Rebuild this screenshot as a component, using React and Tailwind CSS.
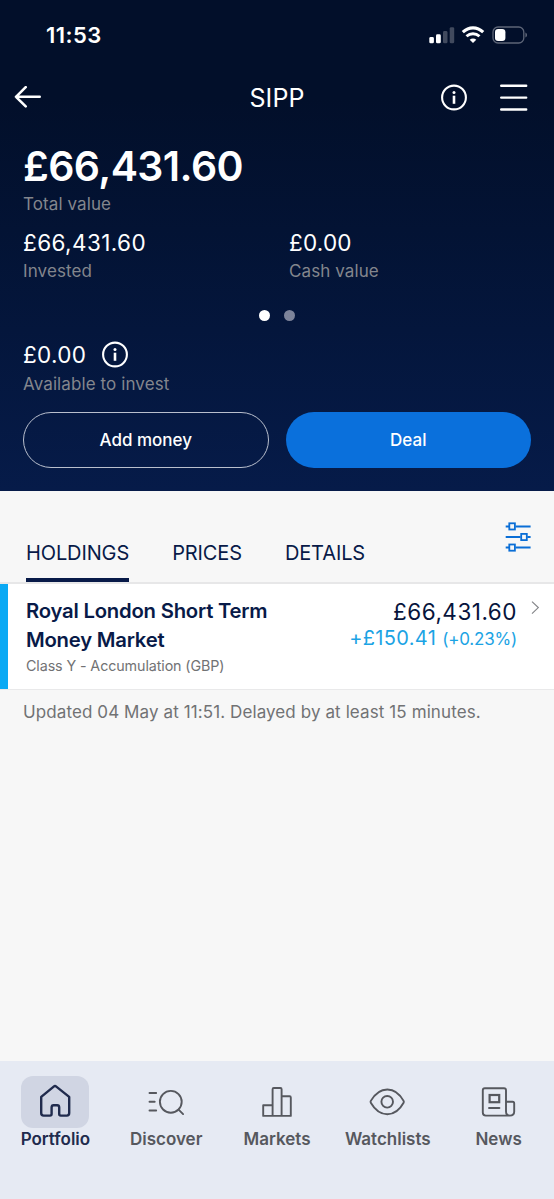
const stats = [
  { value: "£66,431.60", label: "Invested" },
  { value: "£0.00", label: "Cash value" },
];

const tabs = ["HOLDINGS", "PRICES", "DETAILS"];

const InfoIcon = () => {
  return (
    <svg width="28" height="28" viewBox="0 0 28 28" fill="none">
      <circle cx="14" cy="13.5" r="11.9" stroke="white" strokeWidth="2.1" />
      <circle cx="14" cy="8.4" r="1.5" fill="white" />
      <path d="M14 11.7V19.8" stroke="white" strokeWidth="2.6" />
    </svg>
  );
};

const StatusBar = () => {
  return (
    <div className="flex items-center justify-between h-[70px] pl-[46px] pr-[26px]">
      <span className="text-[22px] font-semibold tracking-[0.45px]">11:53</span>
      <svg width="100" height="20" viewBox="0 0 100 20" fill="none">
        <rect x="1.3" y="12" width="4.6" height="6.3" rx="1.4" fill="white" />
        <rect x="8" y="9.3" width="4.8" height="9" rx="1.4" fill="white" />
        <rect x="15" y="6" width="4.5" height="12.3" rx="1.4" fill="#414a5e" />
        <rect x="21.7" y="2.2" width="4.5" height="16.1" rx="1.4" fill="#414a5e" />
        <path
          d="M34.8 7.2C40.9 1.4 49.1 1.4 55.2 7.2"
          stroke="white"
          strokeWidth="3.1"
        />
        <path
          d="M38.5 11.3C42.3 7.8 47.7 7.8 51.5 11.3"
          stroke="white"
          strokeWidth="2.9"
        />
        <path
          d="M45 18.1L41.7 14.7C43.6 13.1 46.4 13.1 48.3 14.7Z"
          fill="white"
        />
        <rect
          x="65"
          y="2"
          width="30.8"
          height="16"
          rx="5"
          stroke="#5d6577"
          strokeWidth="1.3"
        />
        <rect x="67" y="4" width="10.4" height="12" rx="3.2" fill="white" />
        <path d="M97.4 7.5C99.6 8.2 99.6 11.8 97.4 12.5Z" fill="#5d6577" />
      </svg>
    </div>
  );
};

const Header = () => {
  return (
    <div className="grid grid-cols-3 items-center h-[55px] pl-[14px] pr-[26px]">
      <svg width="28" height="24" viewBox="0 0 28 24" fill="none">
        <path
          d="M25.7 10.8H2M11.7 1.2L2 10.8L11.7 20.4"
          stroke="white"
          strokeWidth="2.6"
          strokeLinecap="round"
          strokeLinejoin="round"
        />
      </svg>
      <h1 className="pt-[2px] pl-3 text-[25px] font-normal text-center tracking-[0.1px]">
        SIPP
      </h1>
      <div className="flex items-center justify-end gap-8">
        <InfoIcon />
        <svg width="28" height="28" viewBox="0 0 28 28" fill="none">
          <path
            d="M1.2 1.7H26.2M1.2 13.6H26.2M1.2 25.5H26.2"
            stroke="white"
            strokeWidth="2.4"
            strokeLinecap="round"
          />
        </svg>
      </div>
    </div>
  );
};

const Summary = () => {
  return (
    <div className="px-[23px] pt-[15px]">
      <p className="h-[52px] leading-[52px] text-[41px] font-semibold tracking-[-0.6px]">
        £66,431.60
      </p>
      <p className="h-[22px] pt-px leading-[22px] text-[17px] tracking-[0.1px] text-[#83868d]">
        Total value
      </p>
      <div className="grid grid-cols-[266px_1fr] pt-[14px]">
        {stats.map((item, i) => {
          return (
            <div key={i}>
              <p
                className={`leading-[30px] text-[22.5px] ${
                  i === 0 ? "tracking-[0.4px]" : "tracking-[0.2px]"
                }`}
              >
                {item.value}
              </p>
              <p className="leading-[27px] text-[17px] tracking-[0.1px] text-[#83868d]">
                {item.label}
              </p>
            </div>
          );
        })}
      </div>
      <div className="flex justify-center gap-[14px] pt-[25px]">
        <span className="rounded-full size-[11px] bg-white" />
        <span className="rounded-full size-[11px] bg-[#7d849a]" />
      </div>
      <div className="flex items-center gap-[15px] pt-[19px] h-[49px]">
        <span className="text-[22.5px] tracking-[0.3px]">£0.00</span>
        <InfoIcon />
      </div>
      <p className="leading-[28px] text-[17px] tracking-[0.1px] text-[#83868d]">
        Available to invest
      </p>
      <div className="grid grid-cols-2 gap-[17px] pt-[14px]">
        <button className="h-[56px] pt-px rounded-full border-[1.5px] border-[#b9bfcd] text-[17px] font-medium">
          Add money
        </button>
        <button className="h-[56px] pt-px rounded-full bg-[#0a70dc] text-[17px] font-medium">
          Deal
        </button>
      </div>
    </div>
  );
};

const Tabs = () => {
  return (
    <div className="flex justify-between h-[93px] pl-[26px] pr-[22px] border-b-2 border-[#e7e7e8] text-[#081a48]">
      <div className="flex items-end gap-[43px]">
        {tabs.map((tab, i) => {
          return (
            <button
              key={tab}
              className={`h-[45px] pb-[9px] leading-[32px] text-[20px] tracking-[-0.12px] border-b-[4px] ${
                i === 0 ? "border-[#081a48]" : "border-transparent"
              }`}
            >
              {tab}
            </button>
          );
        })}
      </div>
      <svg
        width="27"
        height="32"
        viewBox="0 0 27 32"
        fill="none"
        className="mt-[30px]"
      >
        <path
          d="M0.7 5.4H4M10.5 5.4H25.6M0.7 16H15.5M22.3 16H25.6M0.7 26.6H4M10.5 26.6H25.6"
          stroke="#0a6ed6"
          strokeWidth="2"
        />
        <rect x="4.3" y="2.3" width="5.6" height="6.2" stroke="#0a6ed6" strokeWidth="1.8" />
        <rect x="16.2" y="12.9" width="5.6" height="6.2" stroke="#0a6ed6" strokeWidth="1.8" />
        <rect x="4.3" y="23.5" width="5.6" height="6.2" stroke="#0a6ed6" strokeWidth="1.8" />
      </svg>
    </div>
  );
};

const Holding = () => {
  return (
    <div className="flex h-[106px] bg-white border-b border-[#e9e9ea]">
      <span className="w-[8px] bg-[#0aa9f4]" />
      <div className="flex justify-between grow pl-[18px] pr-[14px] pt-[12px]">
        <div>
          <p className="w-[260px] leading-[29px] text-[20.3px] font-semibold tracking-[-0.22px] text-[#081a48]">
            Royal London Short Term Money Market
          </p>
          <p className="leading-[24px] text-[14.3px] tracking-[-0.1px] text-[#717274]">
            Class Y - Accumulation (GBP)
          </p>
        </div>
        <div className="flex gap-[14px]">
          <div className="text-right">
            <p className="leading-[32px] text-[22.5px] tracking-[0.5px] text-[#06143c]">
              £66,431.60
            </p>
            <p className="leading-[21px] text-[20px] tracking-[0.35px] text-[#1ba3e4]">
              +£150.41{" "}
              <span className="text-[17px] tracking-[-0.2px]">(+0.23%)</span>
            </p>
          </div>
          <svg width="9" height="14" viewBox="0 0 9 14" fill="none" className="mt-[5px]">
            <path d="M1 0.6L7.3 6.6L1 12.6" stroke="#85868a" strokeWidth="1.2" />
          </svg>
        </div>
      </div>
    </div>
  );
};

const navItems = [
  {
    name: "Portfolio",
    icon: (
      <path
        d="M6.2 14.9L18.7 4.6Q20 3.6 21.3 4.6L34.2 14.9V31Q34.2 33.6 31.8 33.6H25.8Q24.2 33.6 24.2 32V25.4Q24.2 23.2 22.2 23.2H18.6Q16.6 23.2 16.6 25.4V32Q16.6 33.6 15 33.6H8.6Q6.2 33.6 6.2 31Z"
        strokeWidth="2.4"
      />
    ),
  },
  {
    name: "Discover",
    icon: (
      <>
        <circle cx="24.8" cy="19.8" r="10.9" />
        <path d="M32.6 27.6L37.1 32.1M3.5 11H10.2M3.5 19.8H8.7M3.5 28.5H10.2" />
      </>
    ),
  },
  {
    name: "Markets",
    icon: (
      <path d="M6.2 33.9V23.2H15.6M15.6 33.9V7.2Q15.6 6 16.8 6H23.4Q24.6 6 24.6 7.2V33.9M24.6 14.3H32.6Q33.8 14.3 33.8 15.5V33.9H6.2" />
    ),
  },
  {
    name: "Watchlists",
    icon: (
      <>
        <path d="M2.8 18.9C11.6 3.6 27.2 3.6 35.6 18.9Q36.1 19.8 35.6 20.7C27.2 36 11.6 36 2.8 20.7Q2.3 19.8 2.8 18.9Z" />
        <circle cx="19.2" cy="19.8" r="5.8" />
      </>
    ),
  },
  {
    name: "News",
    icon: (
      <>
        <path d="M27 29.5V8.2Q27 6.2 25 6.2H5.8Q3.8 6.2 3.8 8.2V30.6Q3.8 33.6 6.8 33.6H30.8Q35.2 33.6 35.2 29.5V21.4Q35.2 19.8 33.6 19.8H27V29.5Q27 33.6 31 33.6" />
        <rect x="10.6" y="13" width="9.6" height="7.2" strokeWidth="2.2" strokeLinejoin="miter" />
        <path d="M10 26H20.4" />
      </>
    ),
  },
];

const BottomNav = () => {
  return (
    <div className="grid grid-cols-5 h-[138px] pt-[15px] bg-[#e6eaf3]">
      {navItems.map((item, i) => {
        return (
          <div
            key={item.name}
            className={`flex flex-col items-center ${
              i === 0 ? "text-[#202b4d]" : "text-[#56585e]"
            }`}
          >
            <span
              className={`flex items-center justify-center w-[68px] h-[52px] rounded-xl ${
                i === 0 ? "bg-[#d0d5e3]" : ""
              }`}
            >
              <svg
                width="40"
                height="40"
                viewBox="0 0 40 40"
                fill="none"
                stroke="currentColor"
                strokeWidth="1.9"
                strokeLinecap="round"
                strokeLinejoin="round"
              >
                {item.icon}
              </svg>
            </span>
            <span className="leading-[22px] text-[17px] font-semibold tracking-[0px]">
              {item.name}
            </span>
          </div>
        );
      })}
    </div>
  );
};

const App = () => {
  return (
    <div className="flex flex-col h-[1199px] w-[554px] overflow-hidden bg-[#f7f7f7] font-['Inter',sans-serif]">
      <div className="h-[491px] shrink-0 text-white bg-linear-to-b from-[#020f2a] from-20% to-[#061b49]">
        <StatusBar />
        <Header />
        <Summary />
      </div>
      <Tabs />
      <Holding />
      <p className="grow px-[23px] pt-[10px] leading-[24px] text-[17px] tracking-[0.1px] text-[#717274]">
        Updated 04 May at 11:51. Delayed by at least 15 minutes.
      </p>
      <BottomNav />
    </div>
  );
};

export default App;
